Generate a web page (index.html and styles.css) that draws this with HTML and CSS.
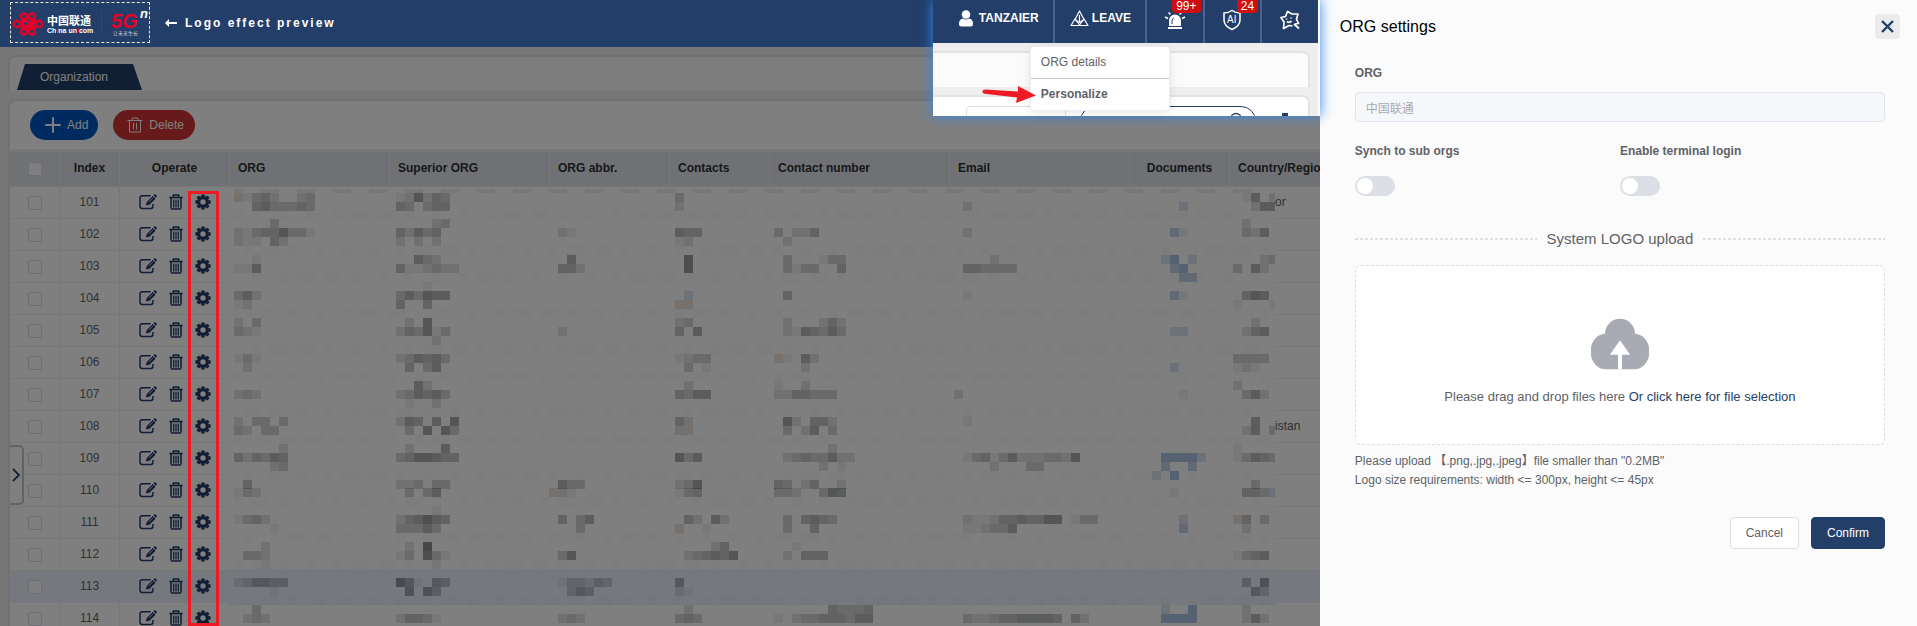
FILE: index.html
```html
<!DOCTYPE html>
<html lang="en">
<head>
    <meta charset="utf-8" />
    <meta name="viewport" content="width=device-width, initial-scale=1.0" />
    <title>ORG settings</title>
    <link rel="stylesheet" href="styles.css">
</head>
<body>
    <!-- icons shared by the rows -->
    <svg class="sprite" aria-hidden="true">
        <symbol id="icon-edit" viewBox="0 0 18 16">
            <path d="M11.5 1.800H3.200Q1 1.800 1 4v8.300Q1 14.500 3.200 14.500h8.600Q14 14.500 14 12.300V10" fill="none" stroke="currentColor" stroke-width="1.500" />
            <path d="M7 11.500l.7-3.600 6-6 2.800 2.800-6 6z" fill="currentColor" />
            <path d="M14.400 1.300l1-.9q.6-.4 1.200.1l1.100 1.200q.5.600 0 1.100l-.9 1z" fill="currentColor" />
            <path d="M9.200 8.500l4.500-4.500" stroke="#fff" stroke-width=".7" />
        </symbol>
        <symbol id="icon-trash" viewBox="0 0 14 16">
            <path d="M4.500 2.800V1h5v1.800M.3 3.500h13.400M2 4v9.500q0 1.500 1.500 1.500h7q1.500 0 1.500-1.500V4" fill="none" stroke="currentColor" stroke-width="1.600" />
            <path d="M4.700 5.500v8M7 5.500v8M9.300 5.500v8" stroke="currentColor" stroke-width="1.300" />
        </symbol>
        <symbol id="icon-gear" viewBox="0 0 16 16">
            <circle cx="8" cy="8" r="4.300" fill="none" stroke="currentColor" stroke-width="3.200" />
            <g stroke="currentColor" stroke-width="3.400">
                <path d="M8 .4v3M8 12.600v3M.4 8h3M12.600 8h3" />
                <path d="M2.600 2.600l2 2M11.400 11.400l2 2M2.600 13.400l2-2M11.400 4.600l2-2" />
            </g>
        </symbol>
    </svg>

    <div class="page">
        <main class="app">
            <header class="topbar">
                <div class="logo-box">
                    <svg class="logo" viewBox="0 0 138 39" role="img" aria-label="China Unicom 5G">
                        <g fill="none" stroke="#e60027" stroke-width="2.400">
                            <circle cx="6" cy="21" r="3.200" />
                            <circle cx="28" cy="21" r="3.200" />
                            <circle cx="13" cy="13.500" r="3" />
                            <circle cx="21" cy="13.500" r="3" />
                            <circle cx="13" cy="28.500" r="3" />
                            <circle cx="21" cy="28.500" r="3" />
                            <path d="M9 20l5-4 9 9 3-3M9 22l5 4 9-9 3 3M17 14l-6 6 6 6 6-6z" />
                        </g>
                        <text class="logo-cn" x="36" y="22">中国联通</text>
                        <text class="logo-en" x="36" y="30">Ch<tspan class="logo-red">i</tspan>na un<tspan class="logo-red">i</tspan>com</text>
                        <path d="M90.500 9v22" stroke="#2d4871" />
                        <text class="logo-5g" x="100" y="25">5G</text>
                        <text class="logo-n" x="129" y="15">n</text>
                        <text class="logo-slogan" x="102" y="32">让未来生长</text>
                    </svg>
                </div>
                <svg class="back-arrow" viewBox="0 0 12 8" aria-hidden="true"><path d="M4 0L0 4l4 4V5h8V3H4z" fill="#fff" /></svg>
                <span class="preview-text">Logo effect preview</span>
            </header>

            <div class="app-body">
                <nav class="tab-card">
                    <a class="tab" href="#organization">Organization</a>
                </nav>
                <section class="org-card">
                    <div class="toolbar">
                        <button class="btn-round btn-add" type="button">
                            <svg width="16" height="16" viewBox="0 0 16 16"><path d="M8 1v14M1 8h14" stroke="#fff" stroke-width="2" stroke-linecap="round" /></svg>
                            Add
                        </button>
                        <button class="btn-round btn-delete" type="button">
                            <svg width="16" height="16" viewBox="0 0 16 16"><path d="M.5 3.500h15M4.500 3.500l1-2.500h5l1 2.500M2.500 3.500V15h11V3.500M6.500 6v6.500M9.500 6v6.500" fill="none" stroke="#fff" stroke-width="1" /></svg>
                            Delete
                        </button>
                    </div>
                    <table class="org-table">
                        <colgroup>
                            <col class="w50"><col class="w60"><col class="w110"><col class="w160"><col class="w160">
                            <col class="w120"><col class="w100"><col class="w180"><col class="w180"><col class="w100"><col class="w180">
                        </colgroup>
                        <thead>
                            <tr>
                                <th class="center"><input class="check" type="checkbox" aria-label="Select all"></th>
                                <th class="center">Index</th>
                                <th class="center">Operate</th>
                                <th>ORG</th>
                                <th>Superior ORG</th>
                                <th>ORG abbr.</th>
                                <th>Contacts</th>
                                <th>Contact number</th>
                                <th>Email</th>
                                <th class="center">Documents</th>
                                <th>Country/Region</th>
                            </tr>
                        </thead>
                        <tbody id="rows"></tbody>
                    </table>
                    <svg class="mosaic" id="mosaic" viewBox="228 189 1047 437" aria-hidden="true"></svg>
                    <button class="side-toggle" type="button" aria-label="Open tree">
                        <svg width="9" height="16" viewBox="0 0 9 16"><path d="M1 1l7 7-7 7" fill="none" stroke="currentColor" stroke-width="2" /></svg>
                    </button>
                </section>
            </div>

            <div class="mark-box"></div>

            <!-- enlarged corner of the top bar with the ORG menu opened -->
            <aside class="inset">
                <div class="inset-bar">
                    <a class="inset-item item-user" href="#user">
                        <svg width="14" height="17" viewBox="0 0 14 17"><circle cx="7" cy="4.500" r="4.300" fill="#fff" /><path d="M0 14q0-5 4-5.500 3 2 6 0 4 .5 4 5.500 0 2.500-2.500 2.500h-9Q0 16.500 0 14z" fill="#fff" /></svg>
                        TANZAIER
                    </a>
                    <a class="inset-item item-leave" href="#leave">
                        <svg width="19" height="17" viewBox="0 0 19 17" fill="none" stroke="#fff" stroke-width="1.200" stroke-linejoin="round"><path d="M9.500 1L14 9.500 9.500 12.500 5 9.500z" /><path d="M5 9l5 6.500H1zM14 9l4 6.500H9z" /><path d="M9.500 5v7.500" /></svg>
                        LEAVE
                    </a>
                    <a class="inset-item item-icon" href="#alarm" aria-label="Alarms">
                        <svg width="22" height="20" viewBox="0 0 22 20"><path d="M5 16v-5.500a6 6 0 0 1 12 0V16zM4 17h14v2H4z" fill="#fff" /><path d="M1 7l3 1.500M21 7l-3 1.500M4.500 2.500l2 2M17.500 2.500l-2 2" stroke="#fff" stroke-width="1.500" /><path d="M8 14v-3q0-2.500 2-3" fill="none" stroke="#233e68" /></svg>
                        <span class="badge">99+</span>
                    </a>
                    <a class="inset-item item-icon" href="#ai" aria-label="AI protection">
                        <svg width="20" height="22" viewBox="0 0 20 22"><path d="M10 1.500q3.500 2.500 8 2.500v7q0 6-8 9.500-8-3.500-8-9.500V4q4.500 0 8-2.500z" fill="none" stroke="#fff" stroke-width="1.500" /><text class="ai-text" x="5" y="14">AI</text></svg>
                        <span class="badge">24</span>
                    </a>
                    <a class="inset-item item-icon" href="#theme" aria-label="Theme">
                        <svg width="20" height="20" viewBox="0 0 20 20" fill="none" stroke="#fff" stroke-width="1.700" stroke-linejoin="round"><path d="M12.500 16L9 15.500 3.500 18.500 4 12 1 7.500 5.500 6.500 7.500 1.500 12 4 18 4 16.500 9 18.500 13.500 15 14" /><path d="M7 11.500q2.500 2 4.500-.5M14 14l5 4.500M6.500 8.500v1M11 7.500v1" /></svg>
                    </a>
                </div>
                <div class="inset-card inset-card-first"></div>
                <div class="inset-card inset-card-second">
                    <div class="inset-select"></div>
                    <div class="inset-search">
                        <svg width="14" height="14" viewBox="0 0 14 14"><circle cx="7" cy="7" r="5.500" fill="none" stroke="#233e68" stroke-width="1.300" /></svg>
                    </div>
                    <i class="inset-dot"></i>
                </div>
                <div class="menu">
                    <a class="menu-item" href="#details">ORG details</a>
                    <a class="menu-item menu-item-active" href="#personalize">Personalize</a>
                </div>
                <svg class="red-arrow" viewBox="0 0 54 18" aria-hidden="true"><path d="M3 3.500q-3 .3-2.500 2.500.3 1.700 2 1.800L35 11.500 34 17l20-7.500L36 0v5.500z" fill="#ed1c24" /></svg>
            </aside>
        </main>

        <form class="drawer">
            <div class="drawer-head">
                <h1 class="drawer-title">ORG settings</h1>
                <button class="close" type="button" aria-label="Close">
                    <svg width="13" height="13" viewBox="0 0 13 13"><path d="M1 1l11 11M12 1L1 12" stroke="#233e68" stroke-width="2.400" /></svg>
                </button>
            </div>
            <div class="drawer-body">
                <label class="label" for="org">ORG</label>
                <input class="org-input" id="org" type="text" value="中国联通" disabled>
                <div class="switches">
                    <div>
                        <label class="label" for="synch">Synch to sub orgs</label>
                        <input class="switch" id="synch" type="checkbox">
                    </div>
                    <div>
                        <label class="label" for="login">Enable terminal login</label>
                        <input class="switch" id="login" type="checkbox">
                    </div>
                </div>
                <h2 class="divider">System LOGO upload</h2>
                <label class="upload">
                    <input class="upload-input" type="file" accept=".png,.jpg,.jpeg">
                    <svg class="cloud" viewBox="0 0 60 54">
                        <path d="M15 53A15 18 0 0 1 14.500 16.500 15.500 15.500 0 0 1 45.500 16.500 15 18 0 0 1 45 53z" fill="#a8abb3" />
                        <path d="M30 23l10.500 15H32v15h-4V38h-8.500z" fill="#fff" />
                    </svg>
                    <span>Please drag and drop files here <em class="upload-link">Or click here for file selection</em></span>
                </label>
                <p class="hint">Please upload 【.png,.jpg,.jpeg】file smaller than "0.2MB"</p>
                <p class="hint">Logo size requirements: width &lt;= 300px, height &lt;= 45px</p>
                <div class="actions">
                    <button class="btn" type="button">Cancel</button>
                    <button class="btn btn-primary" type="submit">Confirm</button>
                </div>
            </div>
        </form>
    </div>
    <script src="table.js"></script>
</body>
</html>
```
FILE: styles.css
```css
* {
    box-sizing: border-box;
}
body {
    margin: 0;
    font-family: "Liberation Sans", "Noto Sans CJK SC", Arial, sans-serif;
    font-size: 12px;
    color: #606266;
}
a {
    color: inherit;
    text-decoration: none;
}
button, input {
    font: inherit;
}
.sprite {
    display: none;
}
.page {
    display: flex;
    height: 100vh;
    overflow: hidden;
}
.app {
    position: relative;
    flex: 1;
    min-width: 0;
    display: flex;
    flex-direction: column;
}

/* top bar */
.topbar {
    display: flex;
    align-items: center;
    height: 47px;
    padding: 0 10px 2px;
    background: #233e68;
    color: #fff;
}
.logo-box {
    width: 140px;
    height: 41px;
    border: 1px dashed #efe9d6;
}
.logo {
    display: block;
    width: 138px;
    height: 39px;
}
.logo-cn {
    font: bold 11px "Noto Sans CJK SC", sans-serif;
    fill: #fff;
}
.logo-en {
    font: bold 7px "Liberation Sans", sans-serif;
    fill: #fff;
}
.logo-red {
    fill: #e60027;
}
.logo-5g {
    font: italic bold 20px "Liberation Sans", sans-serif;
    fill: #e60027;
}
.logo-n {
    font: italic bold 13px "Liberation Sans", sans-serif;
    fill: #fff;
}
.logo-slogan {
    font: 5px "Noto Sans CJK SC", sans-serif;
    fill: #c5cddb;
}
.back-arrow {
    width: 12px;
    height: 8px;
    margin: 0 8px 0 15px;
}
.preview-text {
    font-weight: bold;
    letter-spacing: 2px;
}

/* page under the modal mask */
.app-body {
    position: relative;
    flex: 1;
    min-height: 0;
    overflow: hidden;
    padding: 8px 0 0 8px;
    background: #eee;
}
.app-body::after {
    content: "";
    position: absolute;
    inset: 0;
    background: rgba(0, 0, 0, 0.5);
}
.tab-card {
    height: 36px;
    padding: 7px 7px 0;
    border: 2px solid #e3e3e3;
    border-width: 2px 0 0 2px;
    border-radius: 8px 0 0 0;
    background: #fbfbfb;
}
.tab {
    display: block;
    width: 125px;
    padding-left: 23px;
    line-height: 26px;
    background: #233e68;
    color: #fff;
    clip-path: polygon(8px 0, 116px 0, 100% 100%, 0 100%);
}
.org-card {
    position: relative;
    margin-top: 8px;
    border: 2px solid #e3e3e3;
    border-width: 2px 0 0 2px;
    border-radius: 8px 0 0 0;
    background: #fff;
    overflow: hidden;
}
.toolbar {
    display: flex;
    gap: 15px;
    height: 51px;
    padding: 9px 20px;
    border-bottom: 3px solid #eee;
}
.btn-round {
    display: flex;
    align-items: center;
    gap: 6px;
    height: 30px;
    padding: 0 10px 0 15px;
    border: 0;
    border-radius: 15px;
    color: #fff;
}
.btn-add {
    background: #0056c2;
}
.btn-delete {
    padding: 0 11px 0 14px;
    background: #d03434;
}
.org-table {
    width: 1400px;
    table-layout: fixed;
    border-collapse: separate;
    border-spacing: 0;
}
.w50 { width: 50px; }
.w60 { width: 60px; }
.w100 { width: 100px; }
.w110 { width: 110px; }
.w120 { width: 120px; }
.w160 { width: 160px; }
.w180 { width: 180px; }
.org-table th {
    height: 35px;
    padding: 0 8px 2px;
    border: 1px solid #ebeef5;
    border-width: 0 1px 1px 0;
    background: #dfe2ea;
    color: #303133;
    text-align: left;
    white-space: nowrap;
}
.org-table td {
    height: 32px;
    padding: 0 8px 1px;
    border: 1px solid #ebeef5;
    border-width: 0 1px 1px 0;
}
.org-table .center {
    text-align: center;
}
.org-table td.country {
    padding-left: 45px;
}
.row-current td {
    background: #ebf3fd;
}
.check {
    appearance: none;
    display: block;
    width: 14px;
    height: 14px;
    margin: 1px auto 0;
    border: 1px solid #dcdfe6;
    border-radius: 2px;
    background: #fff;
}
.operate {
    display: flex;
    justify-content: center;
    gap: 12px;
    color: #233e68;
}
.icon-button {
    display: flex;
    padding: 0;
    border: 0;
    background: none;
    color: inherit;
}
.icon-button svg {
    height: 16px;
}
.icon-edit { width: 18px; }
.icon-trash { width: 14px; }
.icon-gear { width: 16px; }
.mosaic {
    position: absolute;
    left: 218px;
    top: 88px;
    width: 1047px;
    height: 437px;
}
.side-toggle {
    position: absolute;
    left: 0;
    top: 344px;
    display: flex;
    align-items: center;
    width: 14px;
    height: 60px;
    padding: 0 2px;
    border: 2px solid #c4c4c4;
    border-left: 0;
    border-radius: 0 5px 5px 0;
    background: #fff;
    color: #233e68;
}

/* call-outs */
.mark-box {
    position: absolute;
    left: 188px;
    top: 191px;
    bottom: 0;
    width: 31px;
    border: 3px solid #ed1c24;
}
.inset {
    position: absolute;
    top: 0;
    right: 0;
    z-index: 2;
    width: 387px;
    height: 116px;
    border-right: 2px solid #fff;
    background: #eee;
    box-shadow: 0 0 12px #3388f0;
}
.inset-bar {
    display: flex;
    height: 43px;
    background: #233e68;
    color: #fff;
    font-weight: bold;
}
.inset-item {
    position: relative;
    display: flex;
    align-items: center;
    gap: 6px;
    padding-bottom: 7px;
    border-right: 2px solid #4d638a;
}
.item-user {
    flex: 0 0 122px;
    padding-left: 26px;
}
.item-leave {
    flex: 0 0 92px;
    gap: 3px;
    padding-left: 15px;
}
.item-icon {
    flex: 1;
    justify-content: center;
}
.item-icon:last-child {
    border-right: 0;
}
.item-icon svg {
    margin-top: 4px;
}
.badge {
    position: absolute;
    top: 0;
    right: 2px;
    padding: 0 4px 1px;
    border-radius: 0 0 4px 4px;
    background: #d10d10;
    font-weight: normal;
    line-height: 12px;
}
.ai-text {
    font: 10px "Liberation Sans", sans-serif;
    fill: #fff;
}
.inset-card {
    margin-top: 8px;
    margin-right: 8px;
    border: 2px solid #e3e3e3;
    border-width: 2px 2px 0 0;
    border-radius: 0 8px 0 0;
}
.inset-card-first {
    height: 36px;
    background: #fbfbfb;
}
.inset-card-second {
    display: flex;
    align-items: flex-start;
    height: 21px;
    padding: 9px 20px 0 33px;
    background: #fff;
    overflow: hidden;
}
.inset-select {
    width: 100px;
    height: 30px;
    margin-right: 14px;
    border: 1px solid #dcdfe6;
    border-radius: 4px 0 0 4px;
}
.inset-search {
    display: flex;
    justify-content: flex-end;
    width: 176px;
    height: 30px;
    padding: 5px 12px 0;
    border: 1px solid #233e68;
    border-radius: 16px;
}
.inset-dot {
    width: 6px;
    height: 3px;
    margin: 7px 0 0 26px;
    background: #233e68;
}
.menu {
    position: absolute;
    left: 97px;
    top: 46px;
    width: 140px;
    border: 1px solid #ebeef5;
    border-radius: 4px;
    background: #fff;
    box-shadow: 0 2px 10px rgba(0, 0, 0, 0.1);
}
.menu-item {
    display: block;
    padding-left: 10px;
    line-height: 31px;
}
.menu-item-active {
    border-top: 1px solid #c8c8c8;
    font-weight: bold;
}
.red-arrow {
    position: absolute;
    left: 49px;
    top: 86px;
    width: 54px;
    height: 18px;
}

/* drawer */
.drawer {
    flex: 0 0 31.15%;
    background: #fbfbfb;
}
.drawer-head {
    display: flex;
    align-items: center;
    justify-content: space-between;
    padding: 14px 17px 14px 20px;
}
.drawer-title {
    margin: 0;
    font-size: 16px;
    font-weight: normal;
    color: #000;
}
.close {
    display: flex;
    align-items: center;
    justify-content: center;
    width: 25px;
    height: 25px;
    padding: 0;
    border: 0;
    border-radius: 4px;
    background: #ebebeb;
}
.drawer-body {
    padding: 12px 32px 0 35px;
}
.label {
    display: block;
    line-height: 16px;
    font-weight: bold;
}
.org-input {
    display: block;
    width: 100%;
    height: 30px;
    margin: 11px 0 21px;
    padding: 0 10px;
    border: 1px solid #e0e4ee;
    border-radius: 4px;
    background: #f5f7fb;
    color: #a8abb2;
}
.switches {
    display: grid;
    grid-template-columns: 1fr 1fr;
}
.switch {
    appearance: none;
    display: block;
    width: 40px;
    height: 20px;
    margin: 17px 0 0;
    padding: 2px;
    border-radius: 10px;
    background: #dcdfe6;
}
.switch::before {
    content: "";
    display: block;
    width: 16px;
    height: 16px;
    border-radius: 50%;
    background: #fff;
}
.switch:checked {
    background: #233e68;
}
.divider {
    display: flex;
    align-items: center;
    gap: 10px;
    margin: 33px 0 16px;
    font-size: 15px;
    font-weight: normal;
    line-height: 20px;
}
.divider::before, .divider::after {
    content: "";
    flex: 1;
    height: 2px;
    background: repeating-linear-gradient(90deg, #e0e0e0 0 3px, transparent 3px 5px);
}
.upload {
    display: flex;
    flex-direction: column;
    align-items: center;
    height: 180px;
    padding-top: 51px;
    border: 1px dashed #dadce0;
    border-radius: 6px;
    background: #fff;
    font-size: 13px;
}
.upload-input {
    position: absolute;
    opacity: 0;
    pointer-events: none;
}
.cloud {
    width: 58px;
    height: 54px;
    margin-bottom: 18px;
}
.upload-link {
    font-style: normal;
    color: #233e68;
}
.hint {
    margin: 0;
    line-height: 19px;
}
.upload + .hint {
    margin-top: 7px;
}
.actions {
    display: flex;
    justify-content: flex-end;
    gap: 12px;
    margin-top: 27px;
}
.btn {
    height: 32px;
    padding: 0 15px;
    border: 1px solid #dcdfe6;
    border-radius: 4px;
    background: #fff;
    color: #606266;
}
.btn-primary {
    border-color: #233e68;
    background: #233e68;
    color: #fff;
}
```
FILE: table.js
```js
// table rows
const rows = document.getElementById("rows");
const countries = { 101: "or", 108: "istan" };

function iconButton(name, label) {
    return `<button class="icon-button" type="button" aria-label="${label}">
        <svg class="icon-${name}"><use href="#icon-${name}"></use></svg></button>`;
}

for (let i = 101; i <= 114; i++) {
    const tr = document.createElement("tr");
    if (i === 113) tr.className = "row-current";
    tr.innerHTML = `
        <td><input class="check" type="checkbox" aria-label="Select ${i}"></td>
        <td class="center">${i}</td>
        <td><div class="operate">${iconButton("edit", "Edit")}${iconButton("trash", "Delete")}${iconButton("gear", "Settings")}</div></td>
        <td></td><td></td><td></td><td></td><td></td><td></td><td></td>
        <td class="country">${countries[i] || ""}</td>`;
    rows.appendChild(tr);
}

// pixelated private data: line y -> runs "column:cells"
// a digit is a shade of grey, a letter is a tint
const CELL = 9;
const LEFT = 234;
const tints = { b: "#dbe4f2", c: "#c2d3ea", d: "#adc4e2", w: "#efe2da" };
const cells = {
    193: "0:w1342..23 18:126243 49:3 112:15.2",
    202: "2:4533343 18:43.344 49:2 81:2 105:b 112:.255",
    219: "4:3 22:23 112:2",
    228: "0:213446331 18:42534 36:21 49:544 60:3.224 81:2 104:c1 112:325",
    237: "0:211.42 18:2.2.2 49:12 61:2",
    255: "2:1 20:532 37:5 50:7 61:3...133 84:2 103:bd.b 114:23",
    264: "0:115 18:4112322 36:442 50:7 61:3133..4 81:443333 104:cd 111:3.52",
    273: "105:cc",
    282: "21:1",
    291: "0:352 18:353655 50:b 61:4 81:1 104:c1 112:465",
    300: "0:12 18:4..4 49:ww 111:1...1",
    318: "0:2.3 19:2.6 49:23 61:2...242 113:2",
    327: "0:321 18:243613 36:2 49:4.5 61:2154353 104:bb 112:245",
    336: "22:2",
    354: "0:131 18:235453 49:1233 60:w1.52 111:3333",
    363: "1:2 19:4.35 50:3.1 63:2 104:b 111:121",
    381: "20:52 50:2 60:1..2 111:2",
    390: "0:232 18:235453 49:4355 60:2244333 80:2 105:1 112:352",
    399: "19:1..2",
    417: "0:2.33.3 18:254.5.6 49:42 61:62.442 81:1 113:5",
    426: "0:32.33 19:3.6.63 49:2w 61:3.25.3 112:25.3",
    444: "5:2 19:2...5 66:2 111:1",
    453: "0:424354 18:3466544 49:635 61:23433522 81:1341352223326 103:ddddb 111:13543",
    462: "4:23 65:2.1 84:2...33 103:c..c",
    471: "102:b.d",
    480: "1:4 18:223.33 36:533 49:236 60:43.24..2 113:3",
    488: "0:132 19:3.35 35:w21 49:134 60:332..365 104:1 112:443b",
    506: "22:1",
    515: "0:1342 18:245754 36:4.35 50:42.52 61:3.4543 81:21124454466.133 105:2 111:w4.3",
    524: "4:1 18:33353 38:3 49:w..1 61:3..4 81:112335 105:c 112:2",
    542: "3:2 19:2.8 53:24 62:1",
    551: "1:332 18:13.731 36:36 50:234546 61:2.444 111:1345",
    560: "3:1 22:1",
    578: "0:235544 18:751.54 36:133243 49:5 112:4.6",
    587: "4:1 19:6.64 37:354 49:21 113:53",
    605: "2:3 50:2 66:43334 103:b..d 112:2",
    614: "1:232 18:24431 36:232 49:343 60:1.233444355 81:32234455554.42 103:dddd 112:252",
};

const mosaic = document.getElementById("mosaic");

function rect(x, y, width, height, fill, opacity) {
    const el = document.createElementNS("http://www.w3.org/2000/svg", "rect");
    const attrs = { x, y, width, height, fill, "fill-opacity": opacity };
    for (const key in attrs) el.setAttribute(key, attrs[key]);
    mosaic.appendChild(el);
}

rect(228, 189, 1047, 437, "#fff", 1);
rect(228, 569, 1047, 36, "#ebf3fd", 1);

// remains of the header line and of the row lines
for (let c = 0; c < 115; c++) {
    if ((c * 5 + (c >> 2)) % 7 < 3) rect(LEFT + c * CELL, 189, CELL, 4, "#223", 0.08);
}
[210, 246, 273, 309, 345, 372, 408, 435, 471, 497, 533, 560, 596].forEach((y, i) => {
    for (let c = 0; c < 115; c++) {
        if ((c * 7 + i * 5 + (c >> 3)) % 11 < 5) rect(LEFT + c * CELL, y, CELL, CELL, "#223", 0.02);
    }
});

for (const y in cells) {
    for (const run of cells[y].split(" ")) {
        const [start, shades] = run.split(":");
        [...shades].forEach((shade, i) => {
            if (shade === ".") return;
            const x = LEFT + (Number(start) + i) * CELL;
            if (tints[shade]) rect(x, y, CELL, CELL, tints[shade], 1);
            else rect(x, y, CELL, CELL, "#111418", shade * 0.06);
        });
    }
}
```
